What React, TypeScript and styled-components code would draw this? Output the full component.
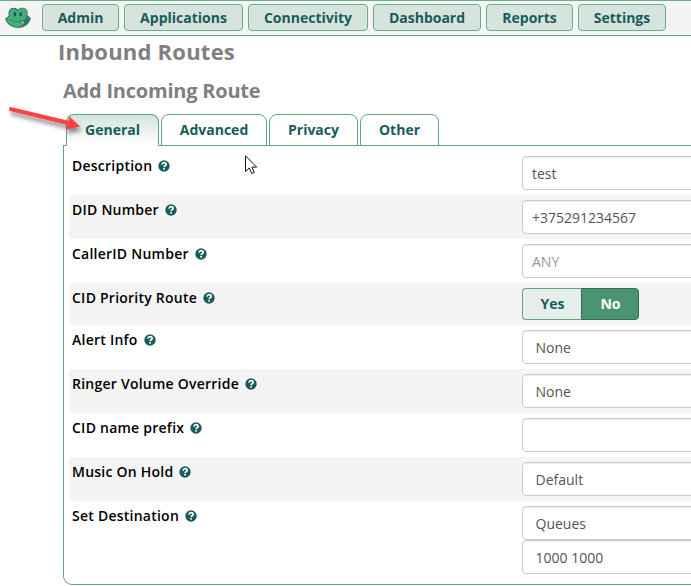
import React from "react";
import styled, { createGlobalStyle } from "styled-components";

const GlobalStyle = createGlobalStyle`
  *, *::before, *::after { box-sizing: border-box; }
  html, body { margin: 0; height: 586px; overflow: hidden; background: #fff; }
  body, button, input { font-family: "Open Sans", "Noto Sans", sans-serif; font-size: 14px; line-height: 20px; }
`;

const Page = styled.div`
  position: relative;
  width: 691px;
  height: 586px;
  overflow: hidden;
  color: #000;
`;

const NavBar = styled.nav`
  display: flex;
  align-items: flex-start;
  gap: 5px;
  height: 36px;
  padding: 3px 0 0 5px;
  background: #f4f4f4;
  border-top: 1px solid #6bac8a;
  border-bottom: 1px solid #5fa582;
`;

const Logo = styled.svg`
  flex: none;
  width: 27px;
  height: 26px;
  margin-right: 5px;
`;

const NavButton = styled.button<{ $width: number }>`
  flex: none;
  width: ${(p) => p.$width}px;
  height: 27px;
  padding: 0;
  color: #175c5c;
  font-weight: 700;
  white-space: nowrap;
  background: #d7e4dd;
  border: 1px solid #6bac8a;
  border-radius: 4px;
`;

const Title = styled.h1`
  margin: 0;
  padding: 0 0 0 58px;
  height: 42px;
  color: #808080;
  font-size: 22px;
  line-height: 31px;
  letter-spacing: 0.22px;
  font-weight: 700;
`;

const Subtitle = styled.h2`
  margin: 0;
  padding: 0 0 0 63px;
  height: 36px;
  color: #808080;
  font-size: 20px;
  line-height: 26px;
  letter-spacing: -0.22px;
  font-weight: 700;
`;

const TabList = styled.div`
  display: flex;
  gap: 2px;
  height: 32px;
  margin-left: 63px;
  padding-left: 3px;
  border-bottom: 1px solid #5fa582;
`;

const Tab = styled.button<{ $width: number; $active?: boolean }>`
  width: ${(p) => p.$width}px;
  height: 32px;
  padding: 0;
  color: #175c5c;
  font-weight: 700;
  background: ${(p) => (p.$active ? "linear-gradient(#d5e4dc, #fff)" : "#fff")};
  border: 1px solid #5fa582;
  border-bottom-color: ${(p) => (p.$active ? "#fff" : "#5fa582")};
  border-radius: 8px 8px 0 0;
`;

const Panel = styled.section`
  width: 640px;
  height: 439px;
  margin-left: 63px;
  padding: 5px 0 0 5px;
  border: 1px solid #5fa582;
  border-top: 0;
  border-bottom-left-radius: 9px;
`;

const Row = styled.div<{ $height: number; $shaded?: boolean }>`
  display: grid;
  grid-template-columns: 453px 1fr;
  height: ${(p) => p.$height}px;
  background: ${(p) => (p.$shaded ? "#f4f4f4" : "#fff")};
  border-radius: 4px;
`;

const Label = styled.div`
  display: flex;
  align-items: center;
  gap: 6px;
  height: 20px;
  margin-top: 5px;
  padding-left: 3px;
  font-weight: 600;
  letter-spacing: 0.24px;
  white-space: nowrap;
`;

const HelpSvg = styled.svg`
  flex: none;
  width: 12px;
  height: 12px;
`;

const Controls = styled.div`
  display: flex;
  flex-direction: column;
  padding-top: 5px;
`;

const TextInput = styled.input`
  width: 220px;
  height: 34px;
  padding: 0 9px;
  color: #555;
  background: #fff;
  border: 1px solid #ccc;
  border-radius: 4px;
  box-shadow: inset 0 1px 1px rgba(0, 0, 0, 0.075);
  outline: 0;
  &::placeholder { color: #999; opacity: 1; }
`;

const Select = styled.div`
  flex: none;
  width: 220px;
  height: 34px;
  padding: 7px 12.5px;
  color: #555;
  background: #fff;
  border: 1px solid #ccc;
  border-radius: 4px;
  box-shadow: inset 0 1px 1px rgba(0, 0, 0, 0.075);
`;

const Toggle = styled.div`
  display: flex;
`;

const ToggleOption = styled.button<{ $selected?: boolean }>`
  width: ${(p) => (p.$selected ? 58 : 59)}px;
  height: 32px;
  padding: 0 0 0 1px;
  font-weight: 700;
  color: ${(p) => (p.$selected ? "#fff" : "#175c5c")};
  background: ${(p) => (p.$selected ? "#4b9470" : "#e5eeea")};
  border: 1px solid ${(p) => (p.$selected ? "#346b50" : "#5fa582")};
  border-right-width: ${(p) => (p.$selected ? 1 : 0)}px;
  border-radius: ${(p) => (p.$selected ? "0 4px 4px 0" : "4px 0 0 4px")};
`;

const Overlay = styled.svg<{ $x: number; $y: number }>`
  position: absolute;
  left: ${(p) => p.$x}px;
  top: ${(p) => p.$y}px;
  pointer-events: none;
`;

const FrogLogo = () => (
  <Logo viewBox="0 0 27 26">
    <path
      d="M6.500 4.800C8.800 3.700 11.300 4.400 13 6.200c1.700-1.900 4.800-2.700 7-1.300 2.100 1.400 2.500 4 1.800 6.400 1 1.200 2.200 2 3.500 2.800-1 4.200-4 7-7.300 8.300-3 1.300-7 1.200-9.800 0C4.500 21 1.500 18 .7 14.700c1.600-.6 2.800-1.500 3.600-3.200-.7-2.900-.1-5.400 2.200-6.700Z"
      fill="#43ae78"
      stroke="#34746c"
      strokeWidth="1.100"
    />
    <path d="M21.500 11.800l3.500 2.400c-.8 3.800-3.700 7-7 8l-3 .5c4-2.800 6-6 6.500-10.900Z" fill="#217f79" />
    <ellipse cx="10" cy="10.200" rx="1.200" ry="2.300" fill="#155458" />
    <ellipse cx="15.800" cy="10.200" rx="1.200" ry="2.300" fill="#155458" />
    <path d="M5 15.700c4.500 2.600 11.300 2.500 16-.8" fill="none" stroke="#2b8260" strokeWidth=".9" />
    <path d="M14.600 17.700c2.300-.4 4.200-1.200 6-2.500-.1 2.700-1.600 4.700-3.400 4.700-1.200-.1-2-1-2.600-2.200Z" fill="#28675a" />
    <path d="M15.500 18.300c1.500-1.200 3.100-1.300 3.900-.4-.5 1.300-1.200 1.800-2.200 1.900Z" fill="#f2a35e" />
  </Logo>
);

const HelpIcon = () => (
  <HelpSvg viewBox="0 0 12 12">
    <circle cx="6" cy="6" r="5.700" fill="#175c5c" />
    <path
      d="M3.900 4.600C4.200 3.200 5 2.700 6.100 2.700c1.200 0 2 .7 2 1.700 0 1.500-1.900 1.300-2 2.700"
      fill="none"
      stroke="#fff"
      strokeWidth="1.700"
    />
    <rect x="5.200" y="8" width="1.700" height="1.600" fill="#fff" />
  </HelpSvg>
);

const navItems: [string, number][] = [
  ["Admin", 77],
  ["Applications", 119],
  ["Connectivity", 120],
  ["Dashboard", 108],
  ["Reports", 87],
  ["Settings", 88],
];

const tabs: [string, number][] = [
  ["General", 93],
  ["Advanced", 106],
  ["Privacy", 89],
  ["Other", 79],
];

const rows: { label: string; height?: number; control: React.ReactNode }[] = [
  { label: "Description", control: <TextInput defaultValue="test" /> },
  { label: "DID Number", control: <TextInput defaultValue="+375291234567" /> },
  { label: "CallerID Number", control: <TextInput placeholder="ANY" /> },
  {
    label: "CID Priority Route",
    height: 42,
    control: (
      <Toggle>
        <ToggleOption>Yes</ToggleOption>
        <ToggleOption $selected>No</ToggleOption>
      </Toggle>
    ),
  },
  { label: "Alert Info", control: <Select>None</Select> },
  { label: "Ringer Volume Override", control: <Select>None</Select> },
  { label: "CID name prefix", control: <TextInput /> },
  { label: "Music On Hold", control: <Select>Default</Select> },
  {
    label: "Set Destination",
    height: 78,
    control: (
      <>
        <Select>Queues</Select>
        <Select>1000 1000</Select>
      </>
    ),
  },
];

export default function App() {
  return (
    <Page>
      <GlobalStyle />
      <NavBar>
        <FrogLogo />
        {navItems.map(([name, width]) => (
          <NavButton key={name} $width={width}>{name}</NavButton>
        ))}
      </NavBar>
      <Title>Inbound Routes</Title>
      <Subtitle>Add Incoming Route</Subtitle>
      <TabList>
        {tabs.map(([name, width], i) => (
          <Tab key={name} $width={width} $active={i === 0}>{name}</Tab>
        ))}
      </TabList>
      <Panel>
        {rows.map((row, i) => (
          <Row key={row.label} $height={row.height ?? 44} $shaded={i % 2 === 1}>
            <Label>
              {row.label}
              <HelpIcon />
            </Label>
            <Controls>{row.control}</Controls>
          </Row>
        ))}
      </Panel>
      <Overlay $x={0} $y={98} width="94" height="46" viewBox="0 0 94 46">
        <defs>
          <filter id="arrowShadow" x="-20%" y="-40%" width="150%" height="220%">
            <feDropShadow dx="1.500" dy="4" stdDeviation="2" floodColor="#000" floodOpacity="0.45" />
          </filter>
        </defs>
        <path d="M9.700 8.800 68.300 22.700 69.500 18.500 80 28.500 66.500 31.500 67.500 27 8.900 12.800Z" fill="#fa4343" filter="url(#arrowShadow)" />
      </Overlay>
      <Overlay $x={245} $y={155} width="14" height="21" viewBox="0 0 14 21">
        <path d="M.5.800V16.500L4.200 13 6.800 18.500 9.300 17.400 6.900 12.100H11.700Z" fill="#fff" stroke="#15152b" strokeWidth="1" />
      </Overlay>
    </Page>
  );
}
